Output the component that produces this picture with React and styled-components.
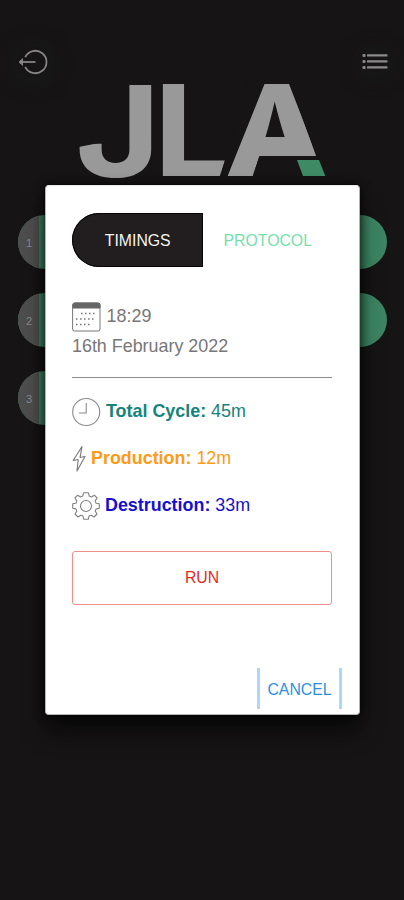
import React, { useState } from 'react';
import styled, { createGlobalStyle } from 'styled-components';

const GlobalStyle = createGlobalStyle`
  * {
    box-sizing: border-box;
  }

  body {
    margin: 0;
    background-color: #161415;
    font-family: 'Liberation Sans', Arial, sans-serif;
  }
`;

const Screen = styled.div`
  position: relative;
  width: 404px;
  height: 900px;
  overflow: hidden;
  background-color: #161415;
`;

const TopBar = styled.header`
  display: flex;
  justify-content: space-between;
  align-items: center;
  height: 32px;
  margin-top: 46px;
  padding: 0 16px 0 17px;
`;

const IconButton = styled.button`
  display: flex;
  padding: 0;
  border: none;
  border-radius: 50%;
  background: none;
  box-shadow: 0 2px 18px 4px rgba(28, 31, 30, 0.5);
`;

const Logo = styled.svg`
  display: block;
  width: 254px;
  height: 98px;
  margin: 4px 0 0 76px;
  overflow: visible;
  font-family: Inter, 'Liberation Sans', sans-serif;
  font-weight: 800;
  font-size: 126px;
`;

const MachineList = styled.div`
  display: flex;
  flex-direction: column;
  gap: 24px;
  padding: 35px 17px 0 18px;
`;

const Machine = styled.div`
  display: flex;
  width: ${({ $short }) => ($short ? '300px' : '100%')};
  height: 54px;
  border-radius: 27px;
  overflow: hidden;
  background-color: #3d8563;
`;

const MachineNumber = styled.span`
  width: 21px;
  padding-left: 8px;
  background-color: #4e4e4e;
  color: #8b8b8b;
  font-size: 11px;
  line-height: 56px;
`;

const Backdrop = styled.div`
  position: absolute;
  inset: 0;
  padding: 185px 44px 0 45px;
`;

const Dialog = styled.div`
  display: flex;
  flex-direction: column;
  height: 530px;
  padding: 28px 27px 5px 26px;
  border: 1px solid #b5b5b5;
  border-top-color: #e8e8e8;
  border-radius: 4px;
  background-color: white;
  box-shadow: 0 11px 15px -7px rgba(0, 0, 0, 0.4), 0 18px 24px 0 rgba(0, 0, 0, 0.45),
    0 0 8px 1px rgba(0, 0, 0, 0.6);
`;

const Tabs = styled.div`
  display: flex;
  flex-shrink: 0;
  height: 54px;
  margin-top: -1px;
`;

const Tab = styled.button`
  width: ${({ $active }) => ($active ? '131px' : '130px')};
  padding: 1px 0 0 1px;
  border: none;
  border-radius: 27px 0 0 27px;
  background-color: ${({ $active }) => ($active ? '#221e1f' : 'transparent')};
  box-shadow: ${({ $active }) => ($active ? 'inset 0 0 0 1px #050505' : 'none')};
  color: ${({ $active }) => ($active ? '#f4f4f4' : '#74dfab')};
  font-family: inherit;
  font-size: 15.8px;
`;

const DateBlock = styled.div`
  height: 111px;
  padding-top: 35px;
  border-bottom: 1px solid #8c8c8c;
  color: #777;
  font-size: 17.9px;
  line-height: 28px;
  text-indent: 0.6px;
`;

const TimeRow = styled.div`
  display: flex;
  align-items: center;
  gap: 5px;
  height: 30px;

  span {
    padding-bottom: 3px;
  }
`;

const TimingRow = styled.div`
  display: flex;
  align-items: center;
  gap: ${({ $gap }) => $gap}px;
  height: 47px;
  color: ${({ $color }) => $color};
  font-size: 17.9px;

  span {
    padding-bottom: 1px;
  }
`;

const Timings = styled.div`
  padding-top: 10px;
`;

const RunButton = styled.button`
  flex-shrink: 0;
  height: 54px;
  margin-top: 22px;
  padding: 0;
  border: 1px solid #ee8f89;
  border-radius: 3px;
  background-color: white;
  color: #e22b22;
  font-family: inherit;
  font-size: 15.8px;
`;

const CancelButton = styled.button`
  align-self: flex-end;
  width: 85px;
  height: 41px;
  margin: auto -10px 0 0;
  padding: 2px 0 0;
  border: solid #aed6fa;
  border-width: 0 3px;
  background-color: white;
  color: #2d8fe2;
  font-family: inherit;
  font-size: 15.8px;
`;

const LogoutIcon = () => (
  <svg width="32" height="32" viewBox="0 0 32 32" fill="none" stroke="#858585" strokeWidth="1.8">
    <path d="M8.2 11.2A11.2 11.2 0 1 1 8.2 20.8" />
    <path d="M2.5 16H18.5" />
    <path d="M6 12.5L2 16L6 19.5" fill="#858585" strokeWidth="1" />
  </svg>
);

const ListIcon = () => (
  <svg width="26" height="20" viewBox="0 0 26 20" fill="#8b8b8b">
    {[2, 8, 14].map((y) => (
      <g key={y}>
        <rect x="0.5" y={y} width="3" height="3" rx="1" />
        <rect x="5" y={y + 0.3} width="20.5" height="2.3" rx="0.5" />
      </g>
    ))}
  </svg>
);

const CalendarIcon = () => (
  <svg width="29" height="30" viewBox="0 0 29 30" fill="none" stroke="#777">
    <rect x="0.6" y="1" width="27.4" height="28" rx="2" />
    <path d="M1 6V3Q1 1 3 1H26Q28 1 28 3V6Z" fill="#666" stroke="#666" />
    <path d="M9 11.5H24M4 17H24M4 22.5H20" strokeWidth="1.5" strokeDasharray="1.5 2.5" />
  </svg>
);

const ClockIcon = () => (
  <svg width="29" height="30" viewBox="0 0 29 30" fill="none" stroke="#8b8b8b" strokeWidth="1.1">
    <circle cx="14.2" cy="15" r="13.5" />
    <path d="M14.2 6V16H7" />
  </svg>
);

const BoltIcon = () => (
  <svg width="14" height="28" viewBox="0 0 14 28" fill="none" stroke="#777" strokeWidth="1.1" strokeLinejoin="round">
    <path d="M10 1.5L1.2 15.5L6.2 14.5L5 26L13 11.5L8 12.5Z" />
  </svg>
);

const GearIcon = () => (
  <svg width="28" height="28" viewBox="0 0 28 28" fill="none" stroke="#808080" strokeWidth="1.1" strokeLinejoin="round">
    <path d="M11.5 .8H16.5L17.2 4.1L19.5 5L22.3 3.2L25.1 6L23.2 8.9L24.1 11.2L27.3 11.8V16.2L24.1 16.9L23.2 19.1L25 22L22 25L19.2 23.2L17 24.1L16.3 27.3H11.7L11 24.1L8.8 23.2L6 25L3 22L4.8 19.1L3.9 16.9L.7 16.2V11.8L3.9 11.2L4.8 8.9L2.9 6L5.7 3.2L8.5 5L10.8 4.1Z" />
    <circle cx="14" cy="14" r="5.5" />
  </svg>
);

const timings = [
  { label: 'Total Cycle', value: '45m', color: '#15837b', gap: 5, Icon: ClockIcon },
  { label: 'Production', value: '12m', color: '#ff9a16', gap: 5, Icon: BoltIcon },
  { label: 'Destruction', value: '33m', color: '#1610d0', gap: 5, Icon: GearIcon },
];

const App = () => {
  const [tab, setTab] = useState('TIMINGS');

  return (
    <>
      <GlobalStyle />
      <Screen>
        <TopBar>
          <IconButton aria-label="Log out"><LogoutIcon /></IconButton>
          <IconButton aria-label="Menu"><ListIcon /></IconButton>
        </TopBar>

        <Logo viewBox="76 82 254 98" fill="#999">
          <text transform="translate(74.8 176.8) scale(1.17 1)" fontWeight="700">J</text>
          <path d="M76 138H104V142L76 147.5Z" fill="#161415" />
          <text transform="translate(153.5 176.3) scale(1.13 1)" fontWeight="700">L</text>
          {/* slanted end of the L */}
          <path d="M227.5 154L219 178H240V154Z" fill="#161415" />
          <text transform="translate(224.5 176.3) scale(1.05 1)">A</text>
          {/* straighter shoulders and a heavier bar */}
          <path d="M226 180L264.5 84V80H248L222 170ZM289 84L317 156H330L300 80H289Z" fill="#161415" />
          <path d="M263 137H291L295 143H259Z" />
          {/* the right leg of the A is cut and replaced by the green foot */}
          <path d="M259.5 156H330V180H251.5Z" fill="#161415" />
          <path d="M297 160H319L325.3 176H303Z" fill="#3d8a65" />
        </Logo>

        <MachineList>
          <Machine><MachineNumber>1</MachineNumber></Machine>
          <Machine><MachineNumber>2</MachineNumber></Machine>
          <Machine $short><MachineNumber>3</MachineNumber></Machine>
        </MachineList>

        <Backdrop>
          <Dialog role="dialog">
            <Tabs>
              {['TIMINGS', 'PROTOCOL'].map((name) => (
                <Tab key={name} $active={tab === name} onClick={() => setTab(name)}>
                  {name}
                </Tab>
              ))}
            </Tabs>

            <DateBlock>
              <TimeRow>
                <CalendarIcon />
                <span>18:29</span>
              </TimeRow>
              16th February 2022
            </DateBlock>

            <Timings>
              {timings.map(({ label, value, color, gap, Icon }) => (
                <TimingRow key={label} $color={color} $gap={gap}>
                  <Icon />
                  <span><b>{label}:</b> {value}</span>
                </TimingRow>
              ))}
            </Timings>

            <RunButton>RUN</RunButton>
            <CancelButton>CANCEL</CancelButton>
          </Dialog>
        </Backdrop>
      </Screen>
    </>
  );
};

export default App;
